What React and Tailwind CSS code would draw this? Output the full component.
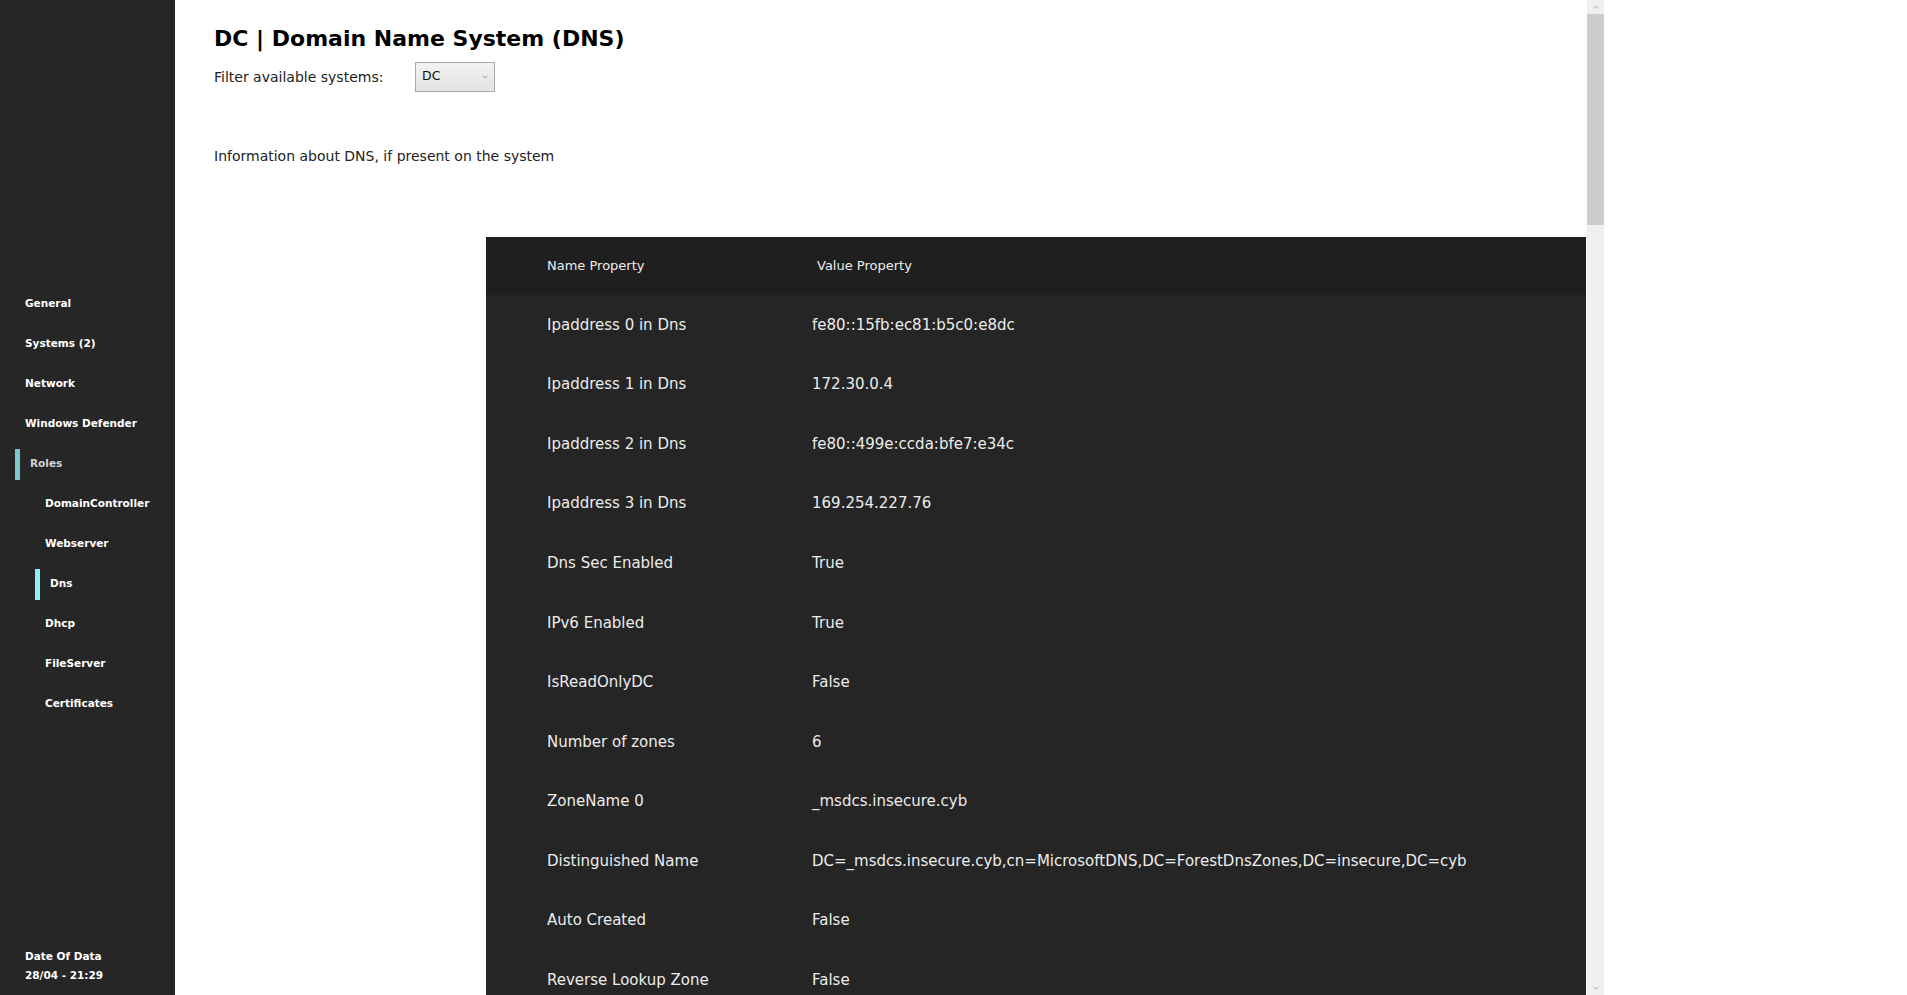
import { ChevronDown, ChevronUp } from 'lucide-react'

const navItems = [
  { label: 'General', level: 0 },
  { label: 'Systems (2)', level: 0 },
  { label: 'Network', level: 0 },
  { label: 'Windows Defender', level: 0 },
  { label: 'Roles', level: 0, active: 'parent' },
  { label: 'DomainController', level: 1 },
  { label: 'Webserver', level: 1 },
  { label: 'Dns', level: 1, active: 'current' },
  { label: 'Dhcp', level: 1 },
  { label: 'FileServer', level: 1 },
  { label: 'Certificates', level: 1 },
]

const rows = [
  ['Ipaddress 0 in Dns', 'fe80::15fb:ec81:b5c0:e8dc'],
  ['Ipaddress 1 in Dns', '172.30.0.4'],
  ['Ipaddress 2 in Dns', 'fe80::499e:ccda:bfe7:e34c'],
  ['Ipaddress 3 in Dns', '169.254.227.76'],
  ['Dns Sec Enabled', 'True'],
  ['IPv6 Enabled', 'True'],
  ['IsReadOnlyDC', 'False'],
  ['Number of zones', '6'],
  ['ZoneName 0', '_msdcs.insecure.cyb'],
  ['Distinguished Name', 'DC=_msdcs.insecure.cyb,cn=MicrosoftDNS,DC=ForestDnsZones,DC=insecure,DC=cyb'],
  ['Auto Created', 'False'],
  ['Reverse Lookup Zone', 'False'],
]

function NavItem({ item }) {
  const indent = item.level === 1 ? 'pl-[45px]' : 'pl-[25px]'
  if (item.active) {
    const bar = item.active === 'current' ? 'bg-[#8eeefa] ml-[35px]' : 'bg-[#7ec9ce] ml-[15px]'
    const text = item.active === 'current' ? 'text-white' : 'text-[#d4d4d4]'
    return (
      <li className="flex h-[40px] items-center">
        <span className={`h-[31px] w-[5px] ${bar}`} />
        <span className={`pl-[10px] ${text}`}>{item.label}</span>
      </li>
    )
  }
  return (
    <li className={`flex h-[40px] items-center text-white ${indent}`}>{item.label}</li>
  )
}

export default function App() {
  return (
    <div className="flex h-[995px] w-full overflow-hidden bg-white font-['DejaVu_Sans',sans-serif]">
      <aside className="flex w-[175px] shrink-0 flex-col bg-[#262626] text-[10.5px] font-bold">
        <ul className="mt-[284px]">
          {navItems.map((item) => (
            <NavItem key={item.label} item={item} />
          ))}
        </ul>
        <div className="mt-auto pb-[10px] pl-[25px] leading-[19px] text-white">
          <p>Date Of Data</p>
          <p>28/04 - 21:29</p>
        </div>
      </aside>

      <main className="w-[1412px] shrink-0 overflow-hidden pl-[39px] pt-[25px]">
        <h1 className="text-[22px] font-bold leading-[28px] text-black">DC | Domain Name System (DNS)</h1>
        <div className="mt-[9px] flex items-center text-[14px] text-[#222]">
          <span className="w-[201px]">Filter available systems:</span>
          <div className="flex h-[30px] w-[80px] items-start justify-between border border-[#a9a9a9] bg-gradient-to-b from-[#f2f2f2] to-[#e3e3e3] pl-[6px] pr-[5px] pt-[5px]">
            <span className="text-[12.5px] leading-[16px] text-[#111]">DC</span>
            <ChevronDown className="mt-[5px] h-[8px] w-[8px] text-[#777]" strokeWidth={2} />
          </div>
        </div>
        <p className="mt-[54px] text-[14px] leading-[20px] text-[#222]">
          Information about DNS, if present on the system
        </p>

        <div className="ml-[272px] mt-[71px] w-[1100px] bg-[#252525] text-[#ececec]">
          <div className="flex h-[58px] items-center bg-[#1f1f1f] text-[13px]">
            <span className="w-[331px] pl-[61px]">Name Property</span>
            <span>Value Property</span>
          </div>
          {rows.map(([name, value], i) => (
            <div key={i} className="flex h-[59.6px] items-center text-[15px]">
              <span className="w-[326px] pl-[61px]">{name}</span>
              <span>{value}</span>
            </div>
          ))}
        </div>
      </main>

      <div className="flex w-[17px] shrink-0 flex-col bg-[#f0f0f0]">
        <div className="flex h-[14px] items-center justify-center">
          <ChevronUp className="h-[10px] w-[10px] text-[#a3a3a3]" strokeWidth={2} />
        </div>
        <div className="h-[211px] bg-[#cdcdcd]" />
        <div className="flex-1" />
        <div className="flex h-[14px] items-center justify-center">
          <ChevronDown className="h-[10px] w-[10px] text-[#a3a3a3]" strokeWidth={2} />
        </div>
      </div>

      <div className="flex-1 bg-white" />
    </div>
  )
}
